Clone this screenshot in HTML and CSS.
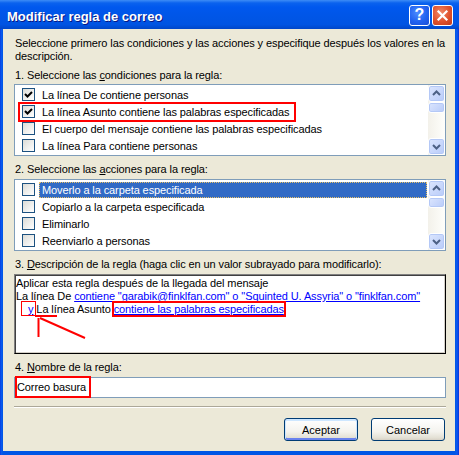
FILE: index.html
```html
<!DOCTYPE html>
<html lang="es">
<head>
    <meta charset="UTF-8">
    <title>Modificar regla de correo</title>
    <link rel="stylesheet" href="styles.css">
</head>
<body>
    <div class="window">
        <div class="titlebar">
            <span class="title">Modificar regla de correo</span>
            <div class="caption-buttons">
                <span class="cap-btn help">?</span>
                <span class="cap-btn close">
                    <svg width="13" height="13" viewBox="0 0 13 13"><path d="M2.5 2.5 L10.5 10.5 M10.5 2.5 L2.5 10.5" stroke="#fff" stroke-width="2.2" stroke-linecap="square"/></svg>
                </span>
            </div>
        </div>

        <div class="client">
            <p class="intro">Seleccione primero las condiciones y las acciones y especifique después los valores en la<br>descripción.</p>

            <div class="label first">1. Seleccione las <u>c</u>ondiciones para la regla:</div>
            <div class="listbox">
                <ul class="items">
                    <li><span class="check checked"></span><span class="item-text">La línea De contiene personas</span></li>
                    <li><span class="check checked"></span><span class="item-text">La línea Asunto contiene las palabras especificadas</span></li>
                    <li><span class="check"></span><span class="item-text">El cuerpo del mensaje contiene las palabras especificadas</span></li>
                    <li><span class="check"></span><span class="item-text">La línea Para contiene personas</span></li>
                </ul>
                <div class="scrollbar">
                    <span class="sb-btn"><svg width="15" height="15" viewBox="0 0 15 15"><path d="M4 9 L7.5 5.5 L11 9" fill="none" stroke="#4D6185" stroke-width="2"/></svg></span>
                    <span class="sb-thumb"></span>
                    <span class="sb-track"></span>
                    <span class="sb-btn"><svg width="15" height="15" viewBox="0 0 15 15"><path d="M4 6 L7.5 9.5 L11 6" fill="none" stroke="#4D6185" stroke-width="2"/></svg></span>
                </div>
                <span class="mark mark-cond"></span>
            </div>

            <div class="label">2. Seleccione las <u>a</u>cciones para la regla:</div>
            <div class="listbox">
                <ul class="items">
                    <li><span class="check"></span><span class="item-text selected">Moverlo a la carpeta especificada</span></li>
                    <li><span class="check"></span><span class="item-text">Copiarlo a la carpeta especificada</span></li>
                    <li><span class="check"></span><span class="item-text">Eliminarlo</span></li>
                    <li><span class="check"></span><span class="item-text">Reenviarlo a personas</span></li>
                </ul>
                <div class="scrollbar">
                    <span class="sb-btn"><svg width="15" height="15" viewBox="0 0 15 15"><path d="M4 9 L7.5 5.5 L11 9" fill="none" stroke="#4D6185" stroke-width="2"/></svg></span>
                    <span class="sb-thumb"></span>
                    <span class="sb-track"></span>
                    <span class="sb-btn"><svg width="15" height="15" viewBox="0 0 15 15"><path d="M4 6 L7.5 9.5 L11 6" fill="none" stroke="#4D6185" stroke-width="2"/></svg></span>
                </div>
            </div>

            <div class="label">3. <u>D</u>escripción de la regla (haga clic en un valor subrayado para modificarlo):</div>
            <div class="description">
                Aplicar esta regla después de la llegada del mensaje<br>
                La línea De <a href="#">contiene "garabik@finklfan.com" o "Squinted U. Assyria" o "finklfan.com"</a><br>
                <span class="indent"><a href="#">y</a> La línea Asunto <a href="#" class="marked">contiene las palabras especificadas</a></span>

                <span class="mark mark-and"></span>
                <span class="mark-line"></span>
                <svg class="mark-arrow" width="80" height="70" viewBox="0 0 80 70">
                    <path d="M23.5 43 L23.5 62" stroke="#f00" stroke-width="2"/>
                    <path d="M25 43 L70 63" stroke="#f00" stroke-width="2"/>
                </svg>
            </div>

            <div class="label">4. <u>N</u>ombre de la regla:</div>
            <div class="field">
                <span class="field-text">Correo basura</span>
                <span class="mark mark-name"></span>
            </div>

            <div class="separator"></div>

            <div class="actions">
                <button class="btn default">Aceptar</button>
                <button class="btn">Cancelar</button>
            </div>
        </div>
    </div>
</body>
</html>
```

FILE: styles.css
```css
body {
    margin: 0;
    font-family: "Liberation Sans", Arial, sans-serif;
    font-size: 11px;
    letter-spacing: -0.1px;
    color: #000;
}
.window {
    width: 459px;
    height: 455px;
    display: flex;
    flex-direction: column;
    background: linear-gradient(90deg, #0831D9 0, #0A5AF0 1px, #0055E5 3px, #0055E5 455px, #0A5AF0 457px, #0831D9 459px);
}
.titlebar {
    height: 29px;
    display: flex;
    align-items: center;
    padding: 0 6px 0 7px;
    background: linear-gradient(to bottom, #3D8CF6 0, #0A62EE 3px, #0058EE 7px, #0056E8 50%, #0054E2 85%, #0046C8 100%);
}
.title {
    flex: 1;
    padding-top: 3px;
    color: #fff;
    font: bold 13px "Liberation Sans", Arial, sans-serif;
    letter-spacing: 0;
    text-shadow: 1px 1px #0A1883;
}
.caption-buttons {
    display: flex;
    gap: 2px;
    padding-top: 1px;
}
.cap-btn {
    box-sizing: border-box;
    width: 21px;
    height: 21px;
    border: 1px solid #fff;
    border-radius: 3px;
    display: flex;
    align-items: center;
    justify-content: center;
    color: #fff;
    font: bold 16px "Liberation Sans", Arial, sans-serif;
    letter-spacing: 0;
}
.help {
    background: radial-gradient(circle at 40% 35%, #4C8CFF 0, #2262F0 55%, #1A4FD6 100%);
}
.close {
    background: radial-gradient(circle at 40% 35%, #F08A6A 0, #E0512C 55%, #C03A18 100%);
}

.client {
    flex: 1;
    margin: 0 4px 4px 3px;
    background: #ECE9D8;
    padding: 8px 9px 0 11px;
    display: flex;
    flex-direction: column;
}
.intro {
    margin: 0;
    padding-left: 1px;
    line-height: 13px;
}
.label {
    line-height: 13px;
    padding-left: 1px;
    margin-top: 7px;
    margin-bottom: 3px;
}
.label.first {
    margin-top: 6px;
    margin-bottom: 2px;
}

.listbox {
    position: relative;
    box-sizing: border-box;
    height: 72px;
    border: 1px solid #7F9DB9;
    background: #fff;
    display: flex;
}
.items {
    flex: 1;
    list-style: none;
    margin: 0;
    padding: 1px 1px 0 0;
}
.items li {
    height: 17px;
    display: flex;
    align-items: center;
}
.check {
    box-sizing: border-box;
    width: 13px;
    height: 13px;
    margin: 0 4px 0 7px;
    border: 1px solid #1C5180;
    background: linear-gradient(135deg, #DCDCD7, #fff);
}
.check.checked {
    background: url("data:image/svg+xml,%3Csvg xmlns='http://www.w3.org/2000/svg' width='11' height='11'%3E%3Cpath d='M2 5 L4.5 7.5 L9 3' fill='none' stroke='%23000' stroke-width='2'/%3E%3C/svg%3E") center no-repeat, linear-gradient(135deg, #DCDCD7, #fff);
}
.item-text {
    flex: 1;
    box-sizing: border-box;
    height: 16px;
    line-height: 14px;
    padding-left: 2px;
    border: 1px solid transparent;
    white-space: nowrap;
}
.item-text.selected {
    background: #316AC5;
    color: #fff;
    border: 1px dotted #E8C068;
}

.scrollbar {
    width: 17px;
    display: flex;
    flex-direction: column;
    background: linear-gradient(90deg, #F3F1EA, #FEFEFB);
}
.sb-btn, .sb-thumb {
    box-sizing: border-box;
    width: 17px;
    border: 1px solid #fff;
    border-radius: 3px;
    background: linear-gradient(135deg, #DCE6FE, #B8CBF9);
    box-shadow: inset 0 0 0 1px #B4C8F6;
    display: flex;
    align-items: center;
    justify-content: center;
}
.sb-btn {
    height: 17px;
}
.sb-thumb {
    height: 11px;
}
.sb-track {
    flex: 1;
}

.mark {
    position: absolute;
    box-sizing: border-box;
    border: 2px solid #f00;
}
.mark-cond {
    left: 3px;
    top: 17px;
    width: 278px;
    height: 20px;
}

.description {
    position: relative;
    box-sizing: border-box;
    height: 80px;
    padding: 2px 0 0 1px;
    line-height: 13px;
    background: #fff;
    border: 1px solid;
    border-color: #808080 #000 #000 #808080;
    box-shadow: inset 1px 1px #404040, inset -1px -1px #D4D0C8;
    white-space: nowrap;
}
.description a {
    color: #0000FF;
}
.indent {
    padding-left: 12px;
}
.marked {
    outline: 2px solid #f00;
}
.mark-and {
    left: 6px;
    top: 26px;
    width: 15px;
    height: 15px;
    border-width: 1px;
}
.mark-line {
    position: absolute;
    left: 20px;
    top: 40px;
    width: 22px;
    height: 2px;
    background: #f00;
}
.mark-arrow {
    position: absolute;
    left: 0;
    top: 0;
}

.field {
    position: relative;
    box-sizing: border-box;
    height: 21px;
    border: 1px solid #7F9DB9;
    background: #fff;
    padding-left: 2px;
    line-height: 19px;
}
.mark-name {
    left: 0;
    top: -2px;
    width: 76px;
    height: 22px;
}

.separator {
    margin-top: 8px;
    border-top: 1px solid #ACA899;
    border-bottom: 1px solid #fff;
}

.actions {
    display: flex;
    justify-content: flex-end;
    gap: 13px;
    margin-top: 10px;
    padding-right: 1px;
}
.btn {
    width: 74px;
    height: 23px;
    padding: 0;
    font-family: "Liberation Sans", Arial, sans-serif;
    font-size: 11px;
    color: #000;
    border: 1px solid #003C74;
    border-radius: 3px;
    background: linear-gradient(to bottom, #FFFFFF 0, #F4F3EE 60%, #E3E0D4 90%, #D6D0C5 100%);
}
.btn.default {
    box-shadow: inset 0 1px 0 1px #CEE7FF, inset 0 -1px 0 1px #6982EE;
}
```
